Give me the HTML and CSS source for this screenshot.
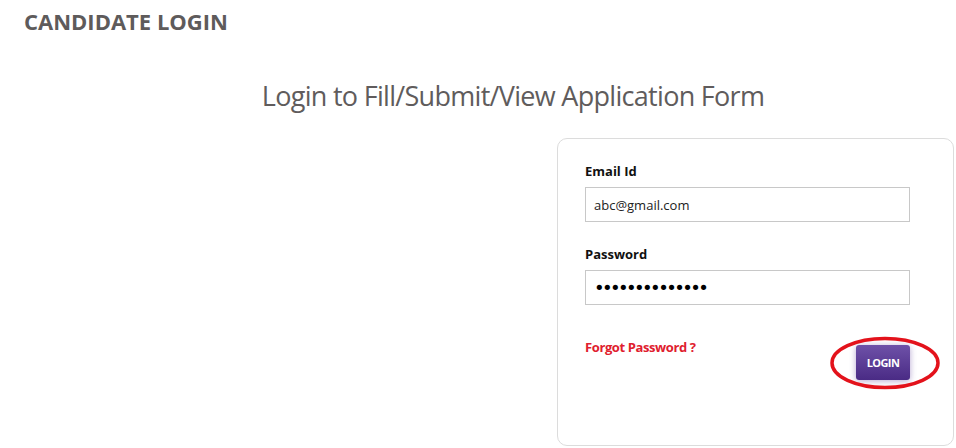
FILE: index.html
```html
<!DOCTYPE html>
<html lang="en">
  <head>
    <meta charset="UTF-8" />
    <meta name="viewport" content="width=device-width, initial-scale=1.0" />
    <title>Candidate Login</title>
    <link rel="stylesheet" href="styles.css">
  </head>
  <body>
    <h1 class="page-title">CANDIDATE LOGIN</h1>

    <div class="login-section">
      <h2 class="login-heading">Login to Fill/Submit/View Application Form</h2>

      <div class="login-row">
        <div class="login-side"></div>
        <div class="login-card">
          <label for="email">Email Id</label>
          <input type="text" id="email" value="abc@gmail.com" />

          <label for="password">Password</label>
          <input type="password" id="password" value="abcdefghijklmn" />

          <div class="login-actions">
            <a href="#" class="forgot-link">Forgot Password ?</a>
            <div class="button-wrap">
              <button class="login-button">LOGIN</button>
              <svg class="highlight" width="114" height="54" viewBox="0 0 114 54">
                <ellipse cx="57" cy="27" rx="53" ry="24.5" fill="none" stroke="#e3121b" stroke-width="3.5" />
              </svg>
            </div>
          </div>
        </div>
      </div>
    </div>
  </body>
</html>
```

FILE: styles.css
```css
body {
  margin: 0;
  background-color: #fff;
  font-family: "Open Sans", "Liberation Sans", sans-serif;
  color: #333;
}

.page-title {
  margin: 0;
  padding: 7px 0 0 24px;
  font-size: 22px;
  font-weight: 700;
  letter-spacing: 0;
  color: #5e5b5b;
  line-height: 28px;
}

.login-section {
  padding-top: 44px;
}

.login-heading {
  margin: 0;
  padding-left: 70px;
  text-align: center;
  font-size: 27px;
  font-weight: 400;
  letter-spacing: -0.7px;
  color: #605c5c;
  line-height: 34px;
}

.login-row {
  display: flex;
  margin-top: 25px;
}

.login-side {
  flex: 1;
}

.login-card {
  width: 368px;
  height: 283px;
  margin-right: 2px;
  padding: 23px 0 0 27px;
  border: 1px solid #dcdcdc;
  border-radius: 10px;
  display: flex;
  flex-direction: column;
}

.login-card label {
  font-size: 13px;
  font-weight: 700;
  color: #111;
  line-height: 18px;
  margin-bottom: 7px;
}

.login-card input {
  width: 325px;
  height: 35px;
  box-sizing: border-box;
  border: 1px solid #c8c8c8;
  padding: 0 8px;
  font-family: "Open Sans", sans-serif;
  font-size: 13px;
  color: #222;
  margin-bottom: 23px;
  outline: none;
}

.login-card input[type="password"] {
  font-family: "DejaVu Sans", sans-serif;
  font-size: 18px;
  letter-spacing: -2.6px;
  color: #000;
}

.login-actions {
  width: 325px;
  display: flex;
  justify-content: space-between;
  align-items: flex-start;
  margin-top: 10px;
}

.forgot-link {
  font-size: 13px;
  font-weight: 700;
  color: #e0202e;
  text-decoration: none;
  letter-spacing: -0.4px;
}

.button-wrap {
  position: relative;
  margin-top: 7px;
}

.login-button {
  display: block;
  width: 54px;
  height: 35px;
  border: none;
  border-radius: 3px;
  background: linear-gradient(#6e51a8, #4a2b85);
  box-shadow: 0 1px 6px rgba(90, 60, 150, 0.45);
  color: #fff;
  font-family: "Open Sans", sans-serif;
  font-size: 11px;
  font-weight: 700;
  letter-spacing: -0.6px;
  cursor: pointer;
}

.highlight {
  position: absolute;
  left: -28px;
  top: -9px;
  pointer-events: none;
}
```
